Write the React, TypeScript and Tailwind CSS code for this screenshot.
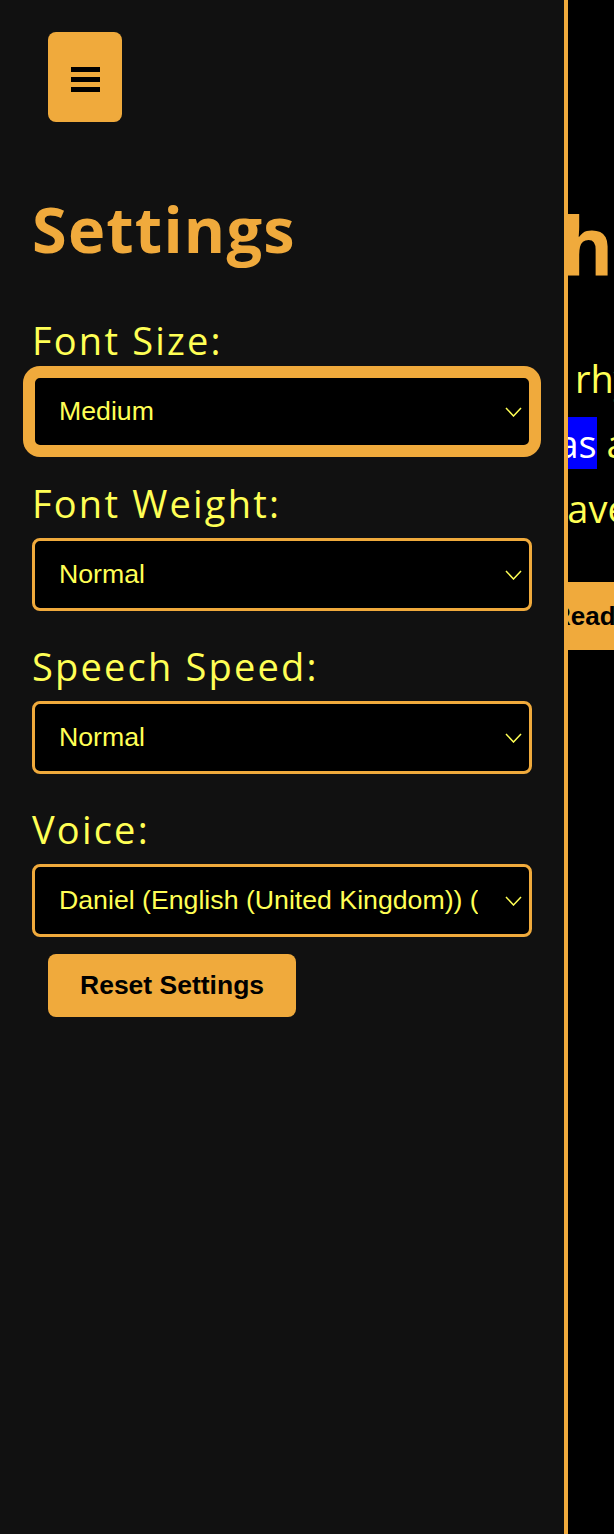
import { useState } from "react";

const ORANGE = "bg-[#f0aa3c]";

function Chevron() {
  return (
    <svg
      width="17"
      height="10"
      viewBox="0 0 17 10"
      className="pointer-events-none absolute right-[10px] top-1/2 -translate-y-1/2"
    >
      <polyline points="1,1 8.5,9 16,1" fill="none" stroke="#ffff55" strokeWidth="1.5" />
    </svg>
  );
}

type FieldProps = {
  label: string;
  value: string;
  options: string[];
  focused?: boolean;
  onChange: (v: string) => void;
};

function Field({ label, value, options, focused, onChange }: FieldProps) {
  return (
    <div className="flex flex-col">
      <label className="font-['Open_Sans',sans-serif] text-[38px] leading-none tracking-[2.2px] text-[#ffff55]">
        {label}
      </label>
      <div className="relative mt-4">
        <select
          value={value}
          onChange={(e) => onChange(e.target.value)}
          className={
            "h-[73px] w-full appearance-none rounded-lg border-[3px] border-[#f0aa3c] bg-black pl-[24px] pr-[51px] font-['Liberation_Sans',Arial,sans-serif] text-[26.7px] text-[#ffff55] outline-none " +
            (focused ? "ring-[9px] ring-[#f0aa3c]" : "")
          }
        >
          {options.map((o) => (
            <option key={o} value={o}>
              {o}
            </option>
          ))}
        </select>
        <Chevron />
      </div>
    </div>
  );
}

export default function App() {
  const [size, setSize] = useState("Medium");
  const [weight, setWeight] = useState("Normal");
  const [speed, setSpeed] = useState("Normal");
  const [voice, setVoice] = useState("Daniel (English (United Kingdom)) (en-GB)");

  return (
    <div className="flex min-h-[1534px] w-full bg-black">
      {/* Settings sidebar */}
      <aside className="flex w-[568px] shrink-0 flex-col border-r-4 border-[#f0aa3c] bg-[#111111] px-8 pt-8">
        <button
          className={`${ORANGE} ml-4 flex h-[90px] w-[74px] flex-col items-center justify-center gap-[5.5px] rounded-lg pt-[5px]`}
        >
          <span className="h-[4.5px] w-[29px] bg-black" />
          <span className="h-[4.5px] w-[29px] bg-black" />
          <span className="h-[4.5px] w-[29px] bg-black" />
        </button>

        <h2 className="mt-[75px] font-['Open_Sans',sans-serif] text-[63px] font-bold leading-none tracking-[1.2px] text-[#f0aa3c]">
          Settings
        </h2>

        <div className="mt-[61px] flex flex-col gap-[36px]">
          <Field
            label="Font Size:"
            value={size}
            options={["Small", "Medium", "Large"]}
            focused
            onChange={setSize}
          />
          <Field
            label="Font Weight:"
            value={weight}
            options={["Normal", "Bold"]}
            onChange={setWeight}
          />
          <Field
            label="Speech Speed:"
            value={speed}
            options={["Slow", "Normal", "Fast"]}
            onChange={setSpeed}
          />
          <Field
            label="Voice:"
            value={voice}
            options={["Daniel (English (United Kingdom)) (en-GB)", "Samantha (English (United States)) (en-US)"]}
            onChange={setVoice}
          />
        </div>

        <button
          className={`${ORANGE} ml-4 mt-[17px] h-[63px] self-start rounded-lg px-8 font-['Liberation_Sans',Arial,sans-serif] text-[26.5px] font-bold text-black`}
        >
          Reset Settings
        </button>
      </aside>

      <main className="flex min-w-0 flex-1 flex-col overflow-hidden whitespace-nowrap bg-black pt-[204px] font-['Open_Sans',sans-serif]">
        <h1 className="-ml-[7px] text-[80px] font-bold leading-none text-[#f0aa3c]">hello</h1>
        <div className="mt-[62px] text-[38px] leading-[65px] text-[#ffff55]">
          <p className="ml-[7px]">rhymes with</p>
          <p className="-ml-[40px]">
            <span className="bg-[#0000ff] text-white">was</span> a little
          </p>
          <p className="-ml-[24px]">have you</p>
        </div>
        <button
          className={`${ORANGE} -ml-[16px] mt-[41px] h-[68px] self-start px-0 font-['Liberation_Sans',Arial,sans-serif] text-[26px] font-bold text-black`}
        >
          Read Aloud
        </button>
      </main>
    </div>
  );
}
